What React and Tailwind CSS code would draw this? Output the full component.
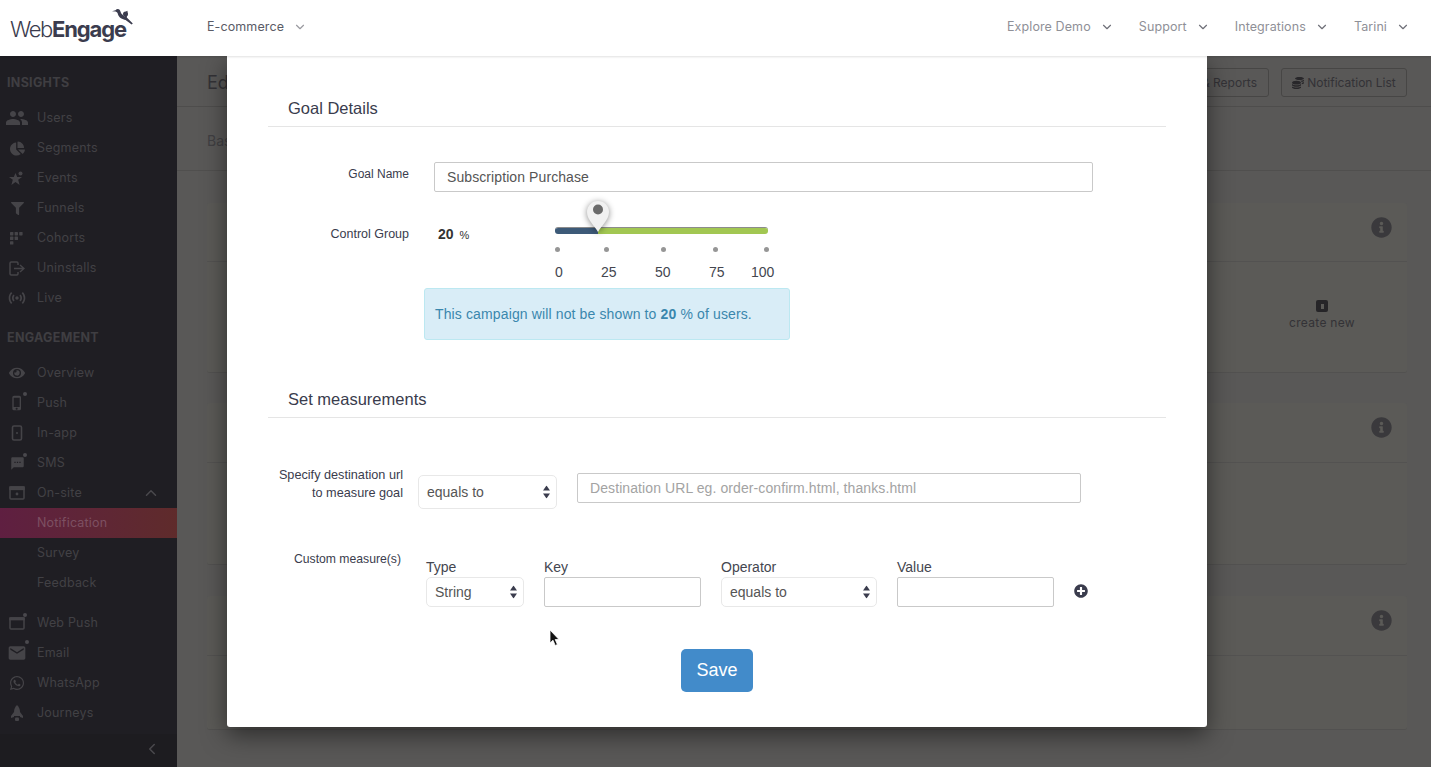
import { ChevronDown, ChevronUp, ChevronLeft } from "lucide-react";
import { FaChartPie, FaFilter, FaEye, FaWhatsapp, FaInfoCircle, FaPlusCircle, FaCoins } from "react-icons/fa";
import { MdEmail, MdSms, MdOutlineSensors, MdOutlinePhoneIphone, MdPeople } from "react-icons/md";

const inter = "font-['Inter','Noto_Sans',sans-serif]";

function CohortIcon() {
    return (
        <svg width="16" height="15" viewBox="0 0 16 15" fill="currentColor">
            <rect x="1" y="1" width="3.4" height="3.4" rx="0.6" />
            <rect x="5.6" y="1" width="3.4" height="3.4" rx="0.6" />
            <rect x="10.2" y="1" width="3.4" height="3.4" rx="0.6" />
            <rect x="1" y="5.6" width="3.4" height="3.4" rx="0.6" />
            <rect x="5.6" y="5.6" width="3.4" height="3.4" rx="0.6" />
            <rect x="1" y="10.2" width="3.4" height="3.4" rx="0.6" />
        </svg>
    );
}

function EventIcon() {
    return (
        <svg width="16" height="15" viewBox="0 0 16 15" fill="currentColor">
            <path d="M6.5 2 8.2 6H13L9.2 8.8 10.6 14 6.5 11 2.4 14 3.8 8.8 0 6H4.8Z" />
            <circle cx="11.5" cy="2.5" r="2" />
        </svg>
    );
}

function UninstallIcon() {
    return (
        <svg width="16" height="15" viewBox="0 0 16 15" fill="none" stroke="currentColor" strokeWidth="1.5">
            <path d="M9 4V2.2C9 1.5 8.5 1 7.8 1H2.2C1.5 1 1 1.5 1 2.2V12.8C1 13.5 1.5 14 2.2 14H7.8C8.5 14 9 13.5 9 12.8V11" />
            <path d="M5 7.5H14M11 4 15 7.5 11 11" />
        </svg>
    );
}

function RocketIcon() {
    return (
        <svg width="12" height="17" viewBox="0 0 12 17" fill="currentColor">
            <path d="M6 0C8 1.8 9 4.4 9 7V11H3V7C3 4.4 4 1.8 6 0Z" />
            <path d="M3 7 0 11V13L3 12ZM9 7 12 11V13L9 12Z" />
            <rect x="4" y="12.5" width="4" height="3.5" rx="1" />
        </svg>
    );
}

function Dot({ children }) {
    return (
        <span className="relative flex items-center justify-center">
            {children}
            <span className="absolute -top-[3px] -right-[2px] h-[4px] w-[4px] rounded-full bg-[#4a494d]" />
        </span>
    );
}

function InAppIcon() {
    return (
        <svg width="12" height="16" viewBox="0 0 12 16" fill="none" stroke="currentColor" strokeWidth="1.6">
            <rect x="1.5" y="1" width="9" height="14" rx="1.5" />
            <circle cx="6" cy="8" r="1" fill="currentColor" stroke="none" />
        </svg>
    );
}

function BrowserIcon() {
    return (
        <svg width="16" height="14" viewBox="0 0 16 14" fill="none" stroke="currentColor" strokeWidth="1.5">
            <rect x="1" y="1" width="14" height="12" rx="1" />
            <rect x="1" y="1" width="14" height="2.4" fill="currentColor" />
            <circle cx="8" cy="8" r="1.4" fill="currentColor" stroke="none" />
        </svg>
    );
}

function WebPushIcon() {
    return (
        <svg width="16" height="14" viewBox="0 0 16 14" fill="none" stroke="currentColor" strokeWidth="1.5">
            <rect x="1" y="2" width="14" height="11" rx="1" />
            <rect x="1" y="2" width="14" height="1.6" fill="currentColor" />
        </svg>
    );
}

const insights = [
    { label: "Users", icon: <MdPeople size={24} /> },
    { label: "Segments", icon: <FaChartPie size={15} /> },
    { label: "Events", icon: <EventIcon /> },
    { label: "Funnels", icon: <FaFilter size={13} /> },
    { label: "Cohorts", icon: <CohortIcon /> },
    { label: "Uninstalls", icon: <UninstallIcon /> },
    { label: "Live", icon: <MdOutlineSensors size={20} /> },
];

const engagement = [
    { label: "Overview", icon: <FaEye size={16} /> },
    { label: "Push", icon: <Dot><MdOutlinePhoneIphone size={16} /></Dot> },
    { label: "In-app", icon: <InAppIcon /> },
    { label: "SMS", icon: <Dot><MdSms size={15} /></Dot> },
];

const channels = [
    { label: "Web Push", icon: <Dot><WebPushIcon /></Dot> },
    { label: "Email", icon: <Dot><MdEmail size={20} /></Dot> },
    { label: "WhatsApp", icon: <FaWhatsapp size={16} /> },
    { label: "Journeys", icon: <RocketIcon /> },
];

function SideItem({ item }) {
    return (
        <div className="flex h-[30px] items-center text-[12.5px] tracking-[0.2px] text-[#424145]">
            <span className="flex w-[37px] shrink-0 items-center justify-center pr-[3px] text-[#454448]">{item.icon}</span>
            {item.label}
        </div>
    );
}

function Sidebar() {
    return (
        <aside className={`flex w-[177px] shrink-0 flex-col bg-[#1f1e23] ${inter}`}>
            <div className="flex-1 overflow-hidden pt-[19px]">
                <div className="mb-[12px] h-[16px] pl-[7px] text-[12.5px] leading-[16px] font-bold tracking-[0.3px] text-[#3f3e42]">INSIGHTS</div>
                {insights.map((item) => <SideItem key={item.label} item={item} />)}
                <div className="mt-[17px] mb-[12px] h-[16px] pl-[7px] text-[12.5px] leading-[16px] font-bold tracking-[0.3px] text-[#3f3e42]">ENGAGEMENT</div>
                {engagement.map((item) => <SideItem key={item.label} item={item} />)}
                <div className="flex h-[30px] items-center justify-between pr-[17px] text-[12.5px] tracking-[0.2px] text-[#424145]">
                    <span className="flex items-center">
                        <span className="flex w-[37px] items-center justify-center pr-[3px] text-[#454448]"><BrowserIcon /></span>
                        On-site
                    </span>
                    <ChevronUp size={18} className="text-[#4a494d]" />
                </div>
                <div className="flex h-[30px] items-center bg-gradient-to-r from-[#5f1f41] to-[#5f2b2b] pl-[37px] text-[12.5px] tracking-[0.2px] text-[#7d5062]">Notification</div>
                <div className="flex h-[30px] items-center pl-[37px] text-[12.5px] tracking-[0.2px] text-[#424145]">Survey</div>
                <div className="mb-[10px] flex h-[30px] items-center pl-[37px] text-[12.5px] tracking-[0.2px] text-[#424145]">Feedback</div>
                {channels.map((item) => <SideItem key={item.label} item={item} />)}
            </div>
            <div className="flex h-[33px] items-center justify-end bg-[#1d1c20] pr-[16px] pb-[4px] text-[#4a494d]">
                <ChevronLeft size={18} />
            </div>
        </aside>
    );
}

function NavItem({ label, strong }) {
    return (
        <div className={`flex items-center gap-[9px] pb-[2px] text-[12.5px] tracking-[0.1px] ${strong ? "text-[#5a5b66]" : "text-[#8f9097]"}`}>
            {label}
            <ChevronDown size={14} className={strong ? "text-[#9a9aa0]" : "text-[#6f7078]"} />
        </div>
    );
}

function Header() {
    return (
        <header className={`relative z-20 flex h-[56px] shrink-0 items-center bg-white shadow-[0_1px_2px_rgba(0,0,0,0.12)] ${inter}`}>
            <div className="relative flex w-[207px] shrink-0 items-baseline pl-[10px] pt-[2px] text-[#3b3c4e]">
                <span className="text-[22px] leading-[28px] font-light tracking-[-1.4px]">Web</span>
                <span className="text-[22px] leading-[28px] font-bold tracking-[-1.1px]">Engage</span>
                <svg className="absolute top-[-5px] left-[111px]" width="23" height="20" viewBox="0 0 23 20" fill="#3b3c4e">
                    <path d="M1 3.2 4.5 2.2C5.6.6 7.6.5 8.6 1.8 9.6 3 9.6 4.6 10.5 5.8L13.6 8.6 15 3.5 16.6 2.8 15.8 9.6 21.8 15.6 20.6 16.4 14.6 12C11.5 11.5 7.8 9.5 7 6.5 6.6 5 6 4 4.6 3.6Z" />
                    <circle cx="14.5" cy="6" r="2.5" />
                </svg>
            </div>
            <NavItem label="E-commerce" strong />
            <div className="ml-auto flex items-center gap-[25px] pr-[21px]">
                <NavItem label="Explore Demo" />
                <NavItem label="Support" />
                <NavItem label="Integrations" />
                <NavItem label="Tarini" />
            </div>
        </header>
    );
}

function BgCard({ height, headHeight, children }) {
    return (
        <div className="rounded-[3px] border-b border-[#525150] bg-[#5b5a57]" style={{ height }}>
            <div className="flex items-start justify-end border-b border-[#535251] pt-[14px] pr-[15px]" style={{ height: headHeight }}>
                <FaInfoCircle size={21} className="text-[#3a393c]" />
            </div>
            {children}
        </div>
    );
}

function Background() {
    return (
        <main className={`min-w-0 flex-1 overflow-hidden bg-[#595857] ${inter}`}>
            <div className="flex h-[51px] items-center justify-between border-b border-[#4e4d4c] pt-[3px] pr-[24px] pl-[30px]">
                <span className="text-[18px] text-[#333236]">Edit Notification</span>
                <div className="flex gap-[12px] text-[12px] text-[#333236]">
                    <span className="flex h-[29px] items-center rounded-[3px] border border-[#474645] px-[11px]">Stats &amp; Reports</span>
                    <span className="flex h-[29px] w-[126px] items-center justify-center gap-[3px] rounded-[3px] border border-[#474645]">
                        <FaCoins size={12} className="text-[#28272a]" />
                        Notification List
                    </span>
                </div>
            </div>
            <div className="flex h-[64px] items-center border-b border-[#504f4e] pt-[4px] pl-[30px] text-[14px] text-[#403f42]">Basic Details</div>
            <div className="pt-[32px] pr-[24px] pl-[30px]">
                <BgCard height={170} headHeight={59}>
                    <div className="flex justify-end pt-[38px] pr-[50px]">
                        <div className="flex w-[70px] flex-col items-center text-[12px] tracking-[0.3px] text-[#333236]">
                            <span className="flex h-[12px] w-[12px] items-center justify-center rounded-[2px] bg-[#262528]">
                                <span className="h-[5px] w-[3px] bg-[#5b5a57]" />
                            </span>
                            <span className="mt-[2px] whitespace-nowrap">create new</span>
                        </div>
                    </div>
                </BgCard>
                <div className="mt-[30px]"><BgCard height={162} headHeight={60} /></div>
                <div className="mt-[31px]"><BgCard height={134} headHeight={60} /></div>
            </div>
        </main>
    );
}

function Arrows() {
    return (
        <svg className="pointer-events-none absolute top-1/2 right-[6px] -translate-y-1/2" width="7" height="13" viewBox="0 0 7 13" fill="#3a3c4d">
            <path d="M3.5 0 7 5H0Z" />
            <path d="M3.5 13 0 8H7Z" />
        </svg>
    );
}

function SelectBox({ value, className }) {
    return (
        <div className={`relative flex items-center rounded-[5px] border border-[#e8e8e8] bg-white pl-[8px] text-[14px] text-[#555] ${className}`}>
            {value}
            <Arrows />
        </div>
    );
}

function TextInput({ value, placeholder, className }) {
    return (
        <input
            readOnly
            value={value}
            placeholder={placeholder}
            className={`rounded-[2px] border border-[#c9c9c9] bg-white px-[12px] text-[14px] tracking-[0.09px] text-[#555] outline-none placeholder:text-[#a3a3a3] ${className}`}
        />
    );
}

function Field({ label, className, children }) {
    return (
        <div className={`flex flex-col ${className}`}>
            <span className="h-[20px] text-[14px] leading-[20px] text-[#44464f]">{label}</span>
            {children}
        </div>
    );
}

function Slider() {
    const dotGaps = ["ml-[0px]", "ml-[44px]", "ml-[52px]", "ml-[47px]", "ml-[46px]"];
    const ticks = [
        { label: "0", width: "w-[8px]", margin: "ml-[0px]" },
        { label: "25", width: "w-[16px]", margin: "ml-[38px]" },
        { label: "50", width: "w-[16px]", margin: "ml-[38px]" },
        { label: "75", width: "w-[16px]", margin: "ml-[38px]" },
        { label: "100", width: "w-[24px]", margin: "ml-[26px]" },
    ];
    return (
        <div className="relative w-[221px]">
            <div className="flex h-[7px] w-[213px] overflow-hidden rounded-[3px] border-t border-[#8c8c8c]">
                <div className="w-[43px] bg-[#3d5a78]" />
                <div className="flex-1 bg-[#a2c752]" />
            </div>
            <div className="mt-[13px] flex">
                {dotGaps.map((gap) => <span key={gap} className={`h-[5px] w-[5px] rounded-full bg-[#969696] ${gap}`} />)}
            </div>
            <div className="mt-[12px] flex text-[14px] leading-[16px] text-[#44464f]">
                {ticks.map((tick) => <span key={tick.label} className={`${tick.width} ${tick.margin}`}>{tick.label}</span>)}
            </div>
            <svg className="absolute -top-[28px] left-[29px] drop-shadow-[0_1px_3px_rgba(0,0,0,0.45)]" width="28" height="34" viewBox="0 0 28 34">
                <path d="M14 33C11 27 3 21 3 13A11 11 0 0 1 25 13C25 21 17 27 14 33Z" fill="#f1f1f1" />
                <circle cx="14" cy="10.5" r="5" fill="#6a6a6a" />
            </svg>
        </div>
    );
}

function Modal() {
    return (
        <div className="absolute top-[56px] left-[227px] z-10 h-[671px] w-[980px] rounded-b-[3px] bg-white px-[41px] font-['Liberation_Sans',sans-serif] shadow-[0_8px_24px_rgba(0,0,0,0.5)]">
            <h3 className="flex h-[71px] items-end border-b border-[#e5e5e5] pb-[8px] pl-[20px] text-[16.5px] leading-[20px] font-medium text-[#3a3c4d]">Goal Details</h3>

            <div className="mt-[35px] flex h-[30px] items-start">
                <span className="w-[141px] pt-[5px] text-right text-[12px] leading-[14px] text-[#3a3c4d]">Goal Name</span>
                <TextInput value="Subscription Purchase" className="ml-[25px] h-[30px] w-[659px]" />
            </div>

            <div className="mt-[35px] flex items-start">
                <span className="w-[141px] text-right text-[12.5px] leading-[14px] text-[#3a3c4d]">Control Group</span>
                <span className="ml-[29px] flex w-[117px] items-baseline gap-[6px] text-[#333]">
                    <b className="text-[14px] leading-[14px]">20</b>
                    <span className="text-[11px]">%</span>
                </span>
                <Slider />
            </div>

            <div className="mt-[8px] ml-[156px] flex h-[52px] w-[366px] items-center rounded-[3px] border border-[#bce8f1] bg-[#d9edf7] pl-[10px] text-[14px] tracking-[0.13px] text-[#3a87ad]">
                This campaign will not be shown to&nbsp;<b>20</b>&nbsp;% of users.
            </div>

            <h3 className="mt-[49px] border-b border-[#e5e5e5] pb-[8px] pl-[20px] text-[16.5px] leading-[20px] font-medium text-[#3a3c4d]">Set measurements</h3>

            <div className="mt-[47px] flex items-start">
                <span className="w-[135px] pt-[1px] text-right text-[12.7px] leading-[18px] text-[#3a3c4d]">
                    Specify destination url
                    <br />
                    to measure goal
                </span>
                <SelectBox value="equals to" className="mt-[10px] ml-[15px] h-[34px] w-[139px]" />
                <TextInput placeholder="Destination URL eg. order-confirm.html, thanks.html" className="mt-[8px] ml-[20px] h-[30px] w-[504px]" />
            </div>

            <div className="mt-[41px] flex items-start">
                <span className="w-[133px] pt-[2px] text-right text-[12.2px] leading-[14px] text-[#3a3c4d]">Custom measure(s)</span>
                <div className="mt-[7px] ml-[25px] flex items-end gap-[20px]">
                    <Field label="Type"><SelectBox value="String" className="h-[30px] w-[98px]" /></Field>
                    <Field label="Key"><TextInput className="h-[30px] w-[157px]" /></Field>
                    <Field label="Operator"><SelectBox value="equals to" className="h-[30px] w-[156px]" /></Field>
                    <Field label="Value"><TextInput className="h-[30px] w-[157px]" /></Field>
                    <FaPlusCircle size={14} className="mb-[9px] text-[#3a3c4d]" />
                </div>
            </div>

            <div className="mt-[42px] flex justify-center">
                <button className="h-[43px] w-[72px] rounded-[5px] bg-[#428bca] text-[18px] text-white">Save</button>
            </div>

            <svg className="absolute top-[573px] left-[322px]" width="12" height="18" viewBox="0 0 12 18">
                <path d="M1 1V14L4 11.2 6.2 16.5 8.4 15.5 6.2 10.5H10Z" fill="#111" stroke="#fff" strokeWidth="0.8" />
            </svg>
        </div>
    );
}

export default function App() {
    return (
        <div className="relative flex h-[767px] w-[1431px] flex-col overflow-hidden">
            <Header />
            <div className="flex min-h-0 flex-1">
                <Sidebar />
                <Background />
            </div>
            <Modal />
        </div>
    );
}
